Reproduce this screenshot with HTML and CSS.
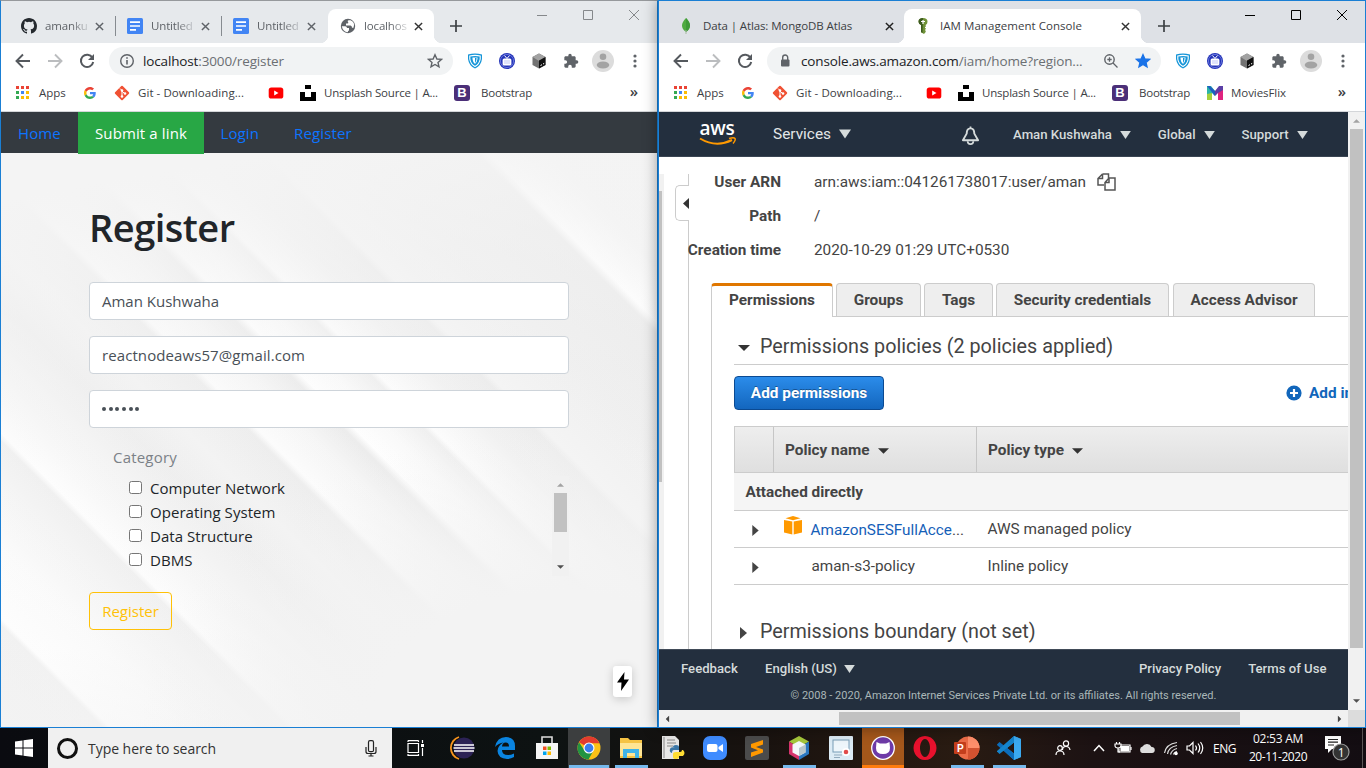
FILE: index.html
```html
<!DOCTYPE html>
<html lang="en">
<head>
<meta charset="utf-8">
<title>Desktop</title>
<link rel="stylesheet" href="styles.css">
</head>
<body>
<svg class="defs" aria-hidden="true">
  <symbol id="close" viewBox="0 0 10 10"><path d="M1 1l8 8M9 1L1 9" stroke="currentColor" stroke-width="1.6" fill="none"/></symbol>
  <symbol id="plus" viewBox="0 0 12 12"><path d="M6 0v12M0 6h12" stroke="#3c4043" stroke-width="1.7"/></symbol>
  <symbol id="back" viewBox="0 0 16 16"><path d="M15 8H2M8 1.5L1.500 8 8 14.500" fill="none" stroke="currentColor" stroke-width="1.9"/></symbol>
  <symbol id="reload" viewBox="0 0 16 16"><path d="M13.400 4.600A6.200 6.200 0 1 0 14.200 9" fill="none" stroke="#55595e" stroke-width="2"/><path d="M15 1v6H9z" fill="#55595e"/></symbol>
  <symbol id="star" viewBox="0 0 16 16"><path d="M8 1.800l1.900 4.200 4.500.4-3.400 3 1 4.500L8 11.500 4 13.900l1-4.500-3.400-3L6.100 6z" stroke-width="1.400" stroke="currentColor"/></symbol>
  <symbol id="shield" viewBox="0 0 16 16"><path d="M1 1.500Q8-.5 15 1.500V6q-1 7-7 9.500Q2 13 1 6z" fill="#1595d8"/><path d="M2.800 3q5.200-1.300 10.400 0v3q-.7 5-5.200 7.500Q3.500 11 2.800 6z" fill="none" stroke="#fff" stroke-width="1.100"/><path d="M5.500 4.500h5V6q-.3 3-2.500 5-2.200-2-2.500-5z" fill="#fff"/><path d="M8 5v5q1.300-1.500 1.500-4V5z" fill="#1595d8"/></symbol>
  <symbol id="tv" viewBox="0 0 16 16"><circle cx="8" cy="8" r="8" fill="#2434b8"/><circle cx="8" cy="8" r="6.600" fill="none" stroke="#8d98ee" stroke-width=".6"/><rect x="3.600" y="5.500" width="8.800" height="7" rx="1.500" fill="#fff"/><rect x="5" y="7" width="6" height="4" fill="#dfe3fb"/><path d="M5.500 2.500L8 5.500l2.500-3" stroke="#fff" fill="none"/></symbol>
  <symbol id="cube" viewBox="0 0 16 16"><path d="M8 .5l6.500 3.500v8L8 15.500 1.500 12V4z" fill="#737373"/><path d="M8 .5l6.500 3.500L8 8 1.500 4z" fill="#a2a2a2"/><path d="M8 7.500l6.500-3.500v8L8 15.500z" fill="#111"/><path d="M9.500 12.500l1.500-.8M12 11l1.200-.6" stroke="#fff"/></symbol>
  <symbol id="puzzle" viewBox="0 0 24 24"><path d="M20.500 11H19V7c0-1.100-.9-2-2-2h-4V3.500a2.500 2.500 0 0 0-5 0V5H4c-1.100 0-2 .9-2 2v3.800h1.500a2.700 2.700 0 0 1 0 5.400H2V20c0 1.100.9 2 2 2h3.800v-1.500a2.700 2.700 0 0 1 5.400 0V22H17c1.100 0 2-.9 2-2v-4h1.500a2.500 2.500 0 0 0 0-5z" fill="#5f6368"/></symbol>
  <symbol id="avatar" viewBox="0 0 22 22"><circle cx="11" cy="11" r="11" fill="#dcdcdc"/><circle cx="11" cy="6.800" r="3.300" fill="#a3a3a3"/><ellipse cx="11" cy="15" rx="6.300" ry="3.500" fill="#a3a3a3"/></symbol>
  <symbol id="dots" viewBox="0 0 4 16"><circle cx="2" cy="3" r="1.600" fill="#5f6368"/><circle cx="2" cy="8" r="1.600" fill="#5f6368"/><circle cx="2" cy="13" r="1.600" fill="#5f6368"/></symbol>
  <symbol id="doc" viewBox="0 0 16 16"><rect width="16" height="16" rx="1.500" fill="#4285f4"/><path d="M3 4.200h10M3 8h10M3 11.800h6" stroke="#fff" stroke-width="1.700"/></symbol>
  <symbol id="github" viewBox="0 0 16 16"><path fill="#24292e" d="M8 0C3.580 0 0 3.580 0 8c0 3.540 2.290 6.530 5.470 7.590.4.070.55-.17.55-.38 0-.19-.01-.82-.01-1.490-2.010.37-2.530-.49-2.690-.94-.09-.23-.48-.94-.82-1.130-.28-.15-.68-.52-.01-.53.63-.01 1.080.58 1.230.82.72 1.210 1.870.87 2.330.66.070-.52.28-.87.51-1.070-1.780-.2-3.640-.89-3.640-3.950 0-.87.31-1.590.82-2.150-.08-.2-.36-1.020.08-2.120 0 0 .67-.21 2.200.82a7.600 7.600 0 0 1 4 0c1.530-1.040 2.200-.82 2.200-.82.44 1.100.16 1.920.08 2.120.51.56.82 1.270.82 2.150 0 3.070-1.870 3.750-3.650 3.950.29.25.54.73.54 1.480 0 1.070-.01 1.930-.01 2.200 0 .21.15.46.55.38A8 8 0 0 0 16 8c0-4.420-3.580-8-8-8z"/></symbol>
  <symbol id="globe" viewBox="0 0 16 16"><circle cx="8" cy="8" r="7.200" fill="#5f6368"/><path d="M1.800 8.300h3.400q1.800.2 1.800 1.800H9v2.500q-1.200.2-1.200 1.600Q3 14 1.800 8.300z" fill="#fff"/><path d="M8.500 2.200Q7 3 8 4t-.5 1.500H6v2h4.500q1.500.2 1.500 2.300h1.500Q15.500 4 10.500 2.200z" fill="#fff"/></symbol>
  <symbol id="leaf" viewBox="0 0 16 16"><path d="M8 0q4 4 4 7.500T8 14Q4 11 4 7.500T8 0z" fill="#4faa41"/><path d="M8 0q4 4 4 7.500T8 14z" fill="#3f9a38"/><path d="M8 12v4" stroke="#a5b8a0"/></symbol>
  <symbol id="key" viewBox="0 0 16 16"><path d="M8 0q4.500 0 4.500 3.700 0 2.300-1.800 3.300v7L9 16l-3-1.800V7Q3.500 6 3.500 3.700 3.500 0 8 0z" fill="#6f9238"/><path d="M8 0q-4.500 0-4.500 3.700Q3.500 6 6 7v7l1.500 1z" fill="#3d5a20"/><path d="M6 3.500h4M8 2v4" stroke="#fff" stroke-width="1.200"/><path d="M10 9.500h1.500M10 12h1.500" stroke="#fff"/></symbol>
  <symbol id="apps" viewBox="0 0 13 13"><path d="M0 0h3v3H0zM5 0h3v3H5zM10 0h3v3h-3z" fill="#ea4335"/><path d="M0 5h3v3H0zM0 10h3v3H0z" fill="#34a853"/><path d="M5 5h3v3H5z" fill="#4285f4"/><path d="M10 5h3v3h-3zM5 10h3v3H5zM10 10h3v3h-3z" fill="#fbbc04"/></symbol>
  <symbol id="google" viewBox="0 0 48 48"><path fill="#EA4335" d="M24 9.500c3.540 0 6.710 1.220 9.210 3.600l6.850-6.850C35.900 2.380 30.470 0 24 0 14.620 0 6.510 5.380 2.560 13.220l7.980 6.190C12.430 13.720 17.740 9.500 24 9.500z"/><path fill="#4285F4" d="M46.980 24.550c0-1.570-.15-3.090-.38-4.550H24v9.020h12.940c-.58 2.960-2.260 5.480-4.780 7.180l7.730 6c4.510-4.180 7.090-10.360 7.090-17.650z"/><path fill="#FBBC05" d="M10.530 28.590A14.500 14.500 0 0 1 9.770 24c0-1.600.27-3.140.76-4.590l-7.980-6.190A23.900 23.900 0 0 0 0 24c0 3.880.92 7.540 2.560 10.780z"/><path fill="#34A853" d="M24 48c6.480 0 11.930-2.130 15.890-5.810l-7.730-6c-2.150 1.450-4.920 2.300-8.160 2.300-6.260 0-11.570-4.220-13.470-9.910l-7.980 6.190C6.510 42.620 14.620 48 24 48z"/></symbol>
  <symbol id="git" viewBox="0 0 16 16"><rect x="2.600" y="2.600" width="10.800" height="10.800" rx="1" transform="rotate(45 8 8)" fill="#f05133"/><path d="M6 3.500l2 2v6M8 6l3 3" stroke="#fff" fill="none"/><circle cx="8" cy="5.500" r="1.300" fill="#fff"/><circle cx="8" cy="11.500" r="1.300" fill="#fff"/><circle cx="11" cy="8.500" r="1.300" fill="#fff"/></symbol>
  <symbol id="youtube" viewBox="0 0 16 16"><rect x=".7" y="2.500" width="14.600" height="11" rx="2.600" fill="#f00"/><path d="M6.200 5.500v5l4.300-2.500z" fill="#fff"/></symbol>
  <symbol id="unsplash" viewBox="0 0 16 16"><path d="M5 0h6v4H5zM0 7h5v5h6V7h5v9H0z"/></symbol>
  <symbol id="movies" viewBox="0 0 16 16"><path d="M0 1h4l4 5v5L5 8v7H0z" fill="#2bb3a8"/><path d="M0 1h3l5 5v5z" fill="#1d5fc0"/><path d="M0 9l5-1v7H0z" fill="#a4cf3c"/><path d="M16 1h-4L8 6v5l3-3v7h5z" fill="#5b3fa6"/><path d="M11 8l5-3v10h-5z" fill="#e0237f"/></symbol>
  <symbol id="down" viewBox="0 0 12 9"><path d="M0 0h12L6 9z" fill="currentColor"/></symbol>
  <symbol id="caret" viewBox="0 0 10 5"><path d="M0 0h10L5 5z" fill="currentColor"/></symbol>
  <symbol id="right" viewBox="0 0 7 12"><path d="M0 0v12l7-6z" fill="#444"/></symbol>
</svg>

<div class="desktop">
<div class="windows">

<section class="window window-left">
  <div class="tabstrip">
    <div class="tab tab-s"><svg class="i16"><use href="#github"/></svg><span class="tab-text">amanku</span><svg class="x"><use href="#close"/></svg></div>
    <div class="tab tab-s"><svg class="i16"><use href="#doc"/></svg><span class="tab-text">Untitled</span><svg class="x"><use href="#close"/></svg></div>
    <div class="tab tab-s last"><svg class="i16"><use href="#doc"/></svg><span class="tab-text">Untitled</span><svg class="x"><use href="#close"/></svg></div>
    <div class="tab tab-s active"><svg class="i16"><use href="#globe"/></svg><span class="tab-text">localhos</span><svg class="x"><use href="#close"/></svg></div>
    <svg class="new"><use href="#plus"/></svg>
    <svg class="winbtns" viewBox="0 0 104 12"><path d="M1 6.500h10M47.500 1.500h9v9h-9zM93 1l10 10M103 1L93 11" fill="none" stroke="currentColor"/></svg>
  </div>
  <div class="toolbar">
    <svg class="nav"><use href="#back"/></svg><svg class="nav fwd"><use href="#back"/></svg><svg class="nav"><use href="#reload"/></svg>
    <div class="omni"><svg class="i16" viewBox="0 0 16 16"><circle cx="8" cy="8" r="6.300" fill="none" stroke="#5f6368" stroke-width="1.400"/><path d="M8 7v4.500M8 4.200v1.600" stroke="#5f6368" stroke-width="1.600"/></svg><span class="url"><b>localhost</b>:3000/register</span><svg class="i16 star"><use href="#star"/></svg></div>
    <div class="exts"><svg class="i16"><use href="#shield"/></svg><svg class="i16"><use href="#tv"/></svg><svg class="i16"><use href="#cube"/></svg><svg class="i16"><use href="#puzzle"/></svg><svg class="ava"><use href="#avatar"/></svg><svg class="dots"><use href="#dots"/></svg></div>
  </div>
  <div class="bookmarks">
    <svg class="i13"><use href="#apps"/></svg><span class="bm b1">Apps</span><svg class="i12"><use href="#google"/></svg>
    <svg class="i16 g1"><use href="#git"/></svg><span class="bm b2">Git - Downloading...</span><svg class="i16"><use href="#youtube"/></svg>
    <svg class="i16 g2"><use href="#unsplash"/></svg><span class="bm b3">Unsplash Source | A...</span><span class="bs">B</span><span class="bm b4">Bootstrap</span><span class="more">»</span>
  </div>
  <div class="site">
    <nav class="sitenav"><a>Home</a><a class="submit">Submit a link</a><a>Login</a><a class="reg">Register</a></nav>
    <main class="form">
      <h1>Register</h1>
      <div class="field">Aman Kushwaha</div>
      <div class="field f2">reactnodeaws57@gmail.com</div>
      <div class="field pw"><i></i><i></i><i></i><i></i><i></i><i></i></div>
      <div class="category">Category</div>
      <div class="listwrap">
        <ul class="list"><li><i></i>Computer Network</li><li><i></i>Operating System</li><li><i></i>Data Structure</li><li><i></i>DBMS</li></ul>
        <div class="scroll"><svg class="sa up"><use href="#caret"/></svg><div class="thumb"></div><svg class="sa"><use href="#caret"/></svg></div>
      </div>
      <button class="btn">Register</button>
    </main>
    <div class="bolt"><svg width="14" height="19" viewBox="0 0 14 19"><path d="M8.500 0L1 10.500h4.500L5 19l8-11.500H8z"/></svg></div>
  </div>
</section>

<section class="window window-right">
  <div class="tabstrip">
    <div class="tab tab-l"><svg class="i16"><use href="#leaf"/></svg><span class="tab-text t1">Data | Atlas: MongoDB Atlas</span><svg class="x"><use href="#close"/></svg></div>
    <div class="tab tab-l active"><svg class="i16"><use href="#key"/></svg><span class="tab-text">IAM Management Console</span><svg class="x"><use href="#close"/></svg></div>
    <svg class="new"><use href="#plus"/></svg>
    <svg class="winbtns" viewBox="0 0 104 12"><path d="M1 6.500h10M47.500 1.500h9v9h-9zM93 1l10 10M103 1L93 11" fill="none" stroke="currentColor"/></svg>
  </div>
  <div class="toolbar">
    <svg class="nav"><use href="#back"/></svg><svg class="nav fwd"><use href="#back"/></svg><svg class="nav"><use href="#reload"/></svg>
    <div class="omni"><svg class="i16" viewBox="0 0 16 16"><rect x="4" y="6.500" width="8.500" height="7" rx="1" fill="#5f6368"/><path d="M5.700 7V4.500a2.500 2.500 0 0 1 5 0V7" fill="none" stroke="#5f6368" stroke-width="1.400"/></svg><span class="url"><b>console.aws.amazon.com</b>/iam/home?region...</span><svg class="i16 mag" viewBox="0 0 16 16"><circle cx="6.500" cy="6.500" r="4.700" fill="none" stroke="#5f6368" stroke-width="1.400"/><path d="M10 10l4.500 4.500M4.300 6.500h4.400M6.500 4.300v4.400" stroke="#5f6368" stroke-width="1.300"/></svg><svg class="i16 star on"><use href="#star"/></svg></div>
    <div class="exts"><svg class="i16"><use href="#shield"/></svg><svg class="i16"><use href="#tv"/></svg><svg class="i16"><use href="#cube"/></svg><svg class="i16"><use href="#puzzle"/></svg><svg class="ava"><use href="#avatar"/></svg><svg class="dots"><use href="#dots"/></svg></div>
  </div>
  <div class="bookmarks">
    <svg class="i13"><use href="#apps"/></svg><span class="bm b1">Apps</span><svg class="i12"><use href="#google"/></svg>
    <svg class="i16 g1"><use href="#git"/></svg><span class="bm b2">Git - Downloading...</span><svg class="i16"><use href="#youtube"/></svg>
    <svg class="i16 g2"><use href="#unsplash"/></svg><span class="bm b3">Unsplash Source | A...</span><span class="bs">B</span><span class="bm b4">Bootstrap</span><svg class="i16 g3"><use href="#movies"/></svg><span class="bm b5">MoviesFlix</span><span class="more">»</span>
  </div>
  <div class="console">
    <div class="view">
      <header class="aws-head">
        <div class="aws-logo"><span>aws</span><svg width="37" height="9" viewBox="0 0 37 9"><path d="M1 1.500Q17 11 33 3" fill="none" stroke="#f90" stroke-width="2"/><path d="M30 1.500q5-1.500 6 0t-2 5" fill="none" stroke="#f90" stroke-width="1.500"/></svg></div>
        <span class="services">Services</span><svg class="dn"><use href="#down"/></svg>
        <svg class="bell" viewBox="0 0 20 20"><path d="M10 2.500q-4 0-4 5.500L2 15h16l-4-7q0-5.500-4-5.500z" fill="none" stroke="currentColor" stroke-width="2" stroke-linejoin="round"/><path d="M10 .5v2M7 16q0 3 3 3t3-3" stroke="currentColor" stroke-width="1.800" fill="none"/></svg>
        <span class="hm">Aman Kushwaha</span><svg class="dn s"><use href="#down"/></svg>
        <span class="hm">Global</span><svg class="dn s"><use href="#down"/></svg>
        <span class="hm">Support</span><svg class="dn s"><use href="#down"/></svg>
      </header>
      <div class="aws-body">
        <div class="nav-scroll"><div></div></div>
        <div class="rail"><div class="rail-top"></div><div class="toggle"><svg width="6" height="11" viewBox="0 0 6 11"><path d="M6 0v11L0 5.500z" fill="#333"/></svg></div><div class="rail-rest"></div></div>
        <div class="content">
          <dl class="facts">
            <dt>User ARN</dt><dd>arn:aws:iam::041261738017:user/aman<svg class="copy" viewBox="0 0 19 18"><path d="M5.500 1h6v4M5.500 1L1 5.500V12h6M5.500 1v4.500H1M12 5h6v12H8V9.500zM12 5v4.500H8" fill="none" stroke="#555" stroke-width="1.500"/></svg></dd>
            <dt>Path</dt><dd>/</dd>
            <dt>Creation time</dt><dd>2020-10-29 01:29 UTC+0530</dd>
          </dl>
          <div class="ctabs"><span class="ct on">Permissions</span><span class="ct c2">Groups</span><span class="ct c3">Tags</span><span class="ct c4">Security credentials</span><span class="ct c5">Access Advisor</span></div>
          <div class="panel">
            <h2><svg class="car"><use href="#caret"/></svg>Permissions policies (2 policies applied)</h2>
            <div class="actions"><button class="add">Add permissions</button><a class="inline"><svg width="16" height="16" viewBox="0 0 16 16"><circle cx="8" cy="8" r="7.600" fill="#1166bb"/><path d="M8 4v8M4 8h8" stroke="#fff" stroke-width="2.200"/></svg>Add in</a></div>
            <div class="thead"><span></span><span>Policy name<svg class="car2"><use href="#caret"/></svg></span><span>Policy type<svg class="car2"><use href="#caret"/></svg></span></div>
            <div class="group">Attached directly</div>
            <div class="row"><svg class="tri"><use href="#right"/></svg><svg class="box" viewBox="0 0 18 19"><path d="M0 4l8.300 1.600V18.500L0 16.500zM18 4L9.700 5.600V18.500L18 16.500z" fill="#f90"/><path d="M9 0l7.500 2.300L9 4.300 1.500 2.300z" fill="#f90"/></svg><span class="pname link">AmazonSESFullAcce<em>...</em></span><span>AWS managed policy</span></div>
            <div class="row"><svg class="tri"><use href="#right"/></svg><i class="box"></i><span class="pname plain">aman-s3-policy</span><span>Inline policy</span></div>
            <h2 class="bound"><svg class="tri"><use href="#right"/></svg>Permissions boundary (not set)</h2>
          </div>
        </div>
      </div>
      <footer class="aws-foot">
        <div class="fl"><span class="f-a">Feedback</span><span>English (US)</span><svg class="dn s"><use href="#down"/></svg><span class="f-p">Privacy Policy</span><span>Terms of Use</span></div>
        <p>© 2008 - 2020, Amazon Internet Services Private Ltd. or its affiliates. All rights reserved.</p>
      </footer>
      <div class="hscroll"><svg class="ha l"><use href="#caret"/></svg><div></div><svg class="ha r"><use href="#caret"/></svg></div>
    </div>
    <div class="vscroll"><svg class="sa up"><use href="#caret"/></svg><div class="vthumb"></div><svg class="sa"><use href="#caret"/></svg><div class="corner"></div></div>
  </div>
</section>
</div>

<div class="taskbar">
  <div class="start"><svg width="18" height="18" viewBox="0 0 18 18"><path d="M0 2.500l7.500-1v7H0zM8.500 1.300L18 0v8.500H8.500zM0 9.500h7.500v7l-7.500-1zM8.500 9.500H18V18l-9.500-1.300z" fill="#fff"/></svg></div>
  <div class="search"><i class="cortana"></i><span>Type here to search</span><svg width="12" height="17" viewBox="0 0 12 17"><rect x="3.500" y=".7" width="5" height="11" rx="1.500" fill="none" stroke="#222" stroke-width="1.200"/><path d="M1 7v4.500q0 2 2 2h6q2 0 2-2V7M6 13.500V16M3.500 16h5" fill="none" stroke="#222" stroke-width="1.200"/></svg></div>
  <div class="task tv"><svg width="18" height="16" viewBox="0 0 18 16"><path d="M1 3.500h10.500v9H1zM1 .500V2M11.500.500V2M1 14v2M11.500 14v2M1 .600h10.500M1 15.400h10.500M15.500 0v3M15.500 8v8" fill="none" stroke="#fff" stroke-width="1.200"/><path d="M14 4h3v3h-3z" fill="#fff"/></svg></div>
  <div class="task"><svg width="24" height="24" viewBox="0 0 24 24"><path d="M8 1a11.500 11.500 0 0 0 0 22" fill="none" stroke="#f7941e" stroke-width="1.800"/><circle cx="13" cy="12" r="10.500" fill="#2c2255"/><path d="M3 9h20M2.500 12h21M3 15h20" stroke="#fff" stroke-width="1.500"/></svg></div>
  <div class="task"><svg width="22" height="22" viewBox="0 0 22 22"><path d="M1 10Q3 0 12 0q9 .5 9 9v4H8q0 5 6 5 3 0 6-1.500V20q-3 2-7 2-9-.5-9.500-8Q4 8 9.500 5.500 4.500 6 1 10zM8 9.500h7q0-4-3.300-4T8 9.500z" fill="#0a84e0"/></svg></div>
  <div class="task"><svg width="24" height="24" viewBox="0 0 24 24"><path d="M1 7h22v16H1z" fill="#f5f5f5"/><path d="M7 7V1h10v6" fill="none" stroke="#ddd" stroke-width="1.600"/><path d="M8 10.500h3.500V14H8z" fill="#f25022"/><path d="M12.500 10.500H16V14h-3.500z" fill="#7fba00"/><path d="M8 15.500h3.500V19H8z" fill="#00a4ef"/><path d="M12.500 15.500H16V19h-3.500z" fill="#ffb900"/></svg></div>
  <div class="task cur run"><svg width="24" height="24" viewBox="0 0 24 24"><circle cx="12" cy="12" r="11.500" fill="#fbc116"/><path d="M12 12L2 6.200A11.500 11.500 0 0 1 22.500 7.200H12z" fill="#e33b2e"/><path d="M2 6.200A11.500 11.500 0 0 0 11.500 23.500l5-9-9 0z" fill="#229342"/><circle cx="12" cy="12" r="5.500" fill="#fff"/><circle cx="12" cy="12" r="4.400" fill="#3b7ded"/></svg></div>
  <div class="task run"><svg width="24" height="22" viewBox="0 0 24 22"><path d="M1 1h8l2 2h12v18H1z" fill="#f5c344"/><path d="M1 6h22v13H1z" fill="#ffe594"/><path d="M4 21v-9h16v9h-4v-5H8v5z" fill="#40b4e8"/></svg></div>
  <div class="task"><svg width="24" height="24" viewBox="0 0 24 24"><path d="M1 0h13l4 4v19H1z" fill="#e8e8e8"/><path d="M3 1v21M6 4h8M6 7h9M6 10h6" stroke="#888"/><path d="M12 11q0-2 3-2t3 2v3h-5q-2 0-2 3-3-1-2-4t5-1z" fill="#3b77a8"/><path d="M22 14q3 3 0 6h-4v1q0 2-3 2t-3-2v-3q0-2 3-2h4q2 0 2-2z" fill="#fd3"/></svg></div>
  <div class="task"><svg width="24" height="24" viewBox="0 0 24 24"><rect width="24" height="24" rx="7" fill="#3f8cff"/><rect x="4" y="8" width="10.500" height="8" rx="2" fill="#fff"/><path d="M15.500 11l4.500-3v8l-4.500-3z" fill="#fff"/></svg></div>
  <div class="task"><svg width="24" height="24" viewBox="0 0 24 24"><rect width="24" height="24" rx="2" fill="#4b4b4b"/><path d="M18 4v4.500L11 11l7 2.500v3L6 21v-4.500l7-2.300-7-2.700V8z" fill="#ff9800"/></svg></div>
  <div class="task run"><svg width="22" height="24" viewBox="0 0 22 24"><path d="M11 0l10 5.500-10 6-10-6z" fill="#a5c73b"/><path d="M1 5.500l10 6V24L1 18z" fill="#d6336c"/><path d="M21 5.500l-10 6V24l10-6z" fill="#2a77c0"/><path d="M11 5l6.500 3.500v8L11 20l-6.500-3.500v-8z" fill="#f4f8fa"/><path d="M11 12l6.500-3.500v8L11 20z" fill="#b9c7cc"/></svg></div>
  <div class="task"><svg width="24" height="24" viewBox="0 0 24 24"><rect width="24" height="24" rx="1" fill="#dcebf5"/><rect x="4" y="4" width="16" height="12" fill="#eef6fb" stroke="#789eb8"/><path d="M5 19h8M5 21.500h6" stroke="#91aabd"/><circle cx="17" cy="16" r="4" fill="#fff"/><circle cx="17" cy="16" r="2.300" fill="#e14b4b"/></svg></div>
  <div class="task gh"><svg width="24" height="24" viewBox="0 0 24 24"><circle cx="12" cy="12" r="11.300" fill="#6e3aa7" stroke="#fff" stroke-width="1.300"/><path d="M5.500 6l3.500 1.500h6L18.500 6 19 12q0 6-7 6t-7-6z" fill="#fff"/></svg></div>
  <div class="task"><svg width="24" height="24" viewBox="0 0 24 24"><path fill-rule="evenodd" d="M12 0a11.500 12 0 1 0 .01 0zM12 3a5 9 0 1 1-.01 0z" fill="#e8112d"/></svg></div>
  <div class="task run"><svg width="26" height="24" viewBox="0 0 26 24"><circle cx="14" cy="12" r="11.500" fill="#ed6c47"/><path d="M14 .5A11.500 11.500 0 0 1 25.500 12H14z" fill="#ff8f6b"/><path d="M14 23.500A11.500 11.500 0 0 0 25.500 12H14z" fill="#d35230"/><rect x="0" y="6" width="12" height="12" rx="1" fill="#c43e1c"/><text x="3" y="15.700" class="pp">P</text></svg></div>
  <div class="task run"><svg width="24" height="24" viewBox="0 0 24 24"><path d="M17 0l7 3v18l-7 3-13-12zM17 6.500L10 12l7 5.500z" fill="#1b8cd8" fill-rule="evenodd"/><path d="M17 0l7 3v18l-7 3z" fill="#3ba9f0"/><path d="M0 8.500L2.500 6 17 17.500V24L0 9z" fill="#0c6dbb"/><path d="M0 15.500L2.500 18 17 6.500V0L0 15z" fill="#1584cc"/></svg></div>
  <div class="tray">
    <svg class="people" viewBox="0 0 16 16"><circle cx="11" cy="3.500" r="2.600"/><path d="M7.500 10q0-3.500 3.500-3.500t4 3.500"/><circle cx="5" cy="8" r="2.300"/><path d="M1 15q0-4 4-4t4 4"/></svg>
    <svg class="ti t-up" viewBox="0 0 16 16"><path d="M3 11l5-5.500L13 11" stroke-width="1.500"/></svg>
    <svg class="ti" viewBox="0 0 18 16"><path d="M7 5h9v7H5V9"/><path d="M7 6.500h7.500V11H7z" fill="#fff"/><path d="M17 7v3M2.500 2v2M5.500 2v2M1 4h6v1.500Q7 8 4 8T1 5.500zM4 8v4h2"/></svg>
    <svg class="ti" viewBox="0 0 18 16"><path d="M4 13a3.500 3.500 0 0 1 .5-6.500A5 5 0 0 1 13.500 7a3 3 0 0 1 .5 6z" fill="#ddd" stroke="none"/></svg>
    <svg class="ti" viewBox="0 0 16 16"><path d="M1.500 13Q3 4 14 2.500M4.500 14Q5.500 7 14 5.500M7.500 14.500Q8.500 10 14 8.500M10.500 14.500q.5-2.500 3.500-3" stroke="#ddd"/><circle cx="13" cy="13.500" r="1.200" fill="#fff"/></svg>
    <svg class="ti" viewBox="0 0 18 16"><path d="M1 6h2.500L7 2.500v11L3.500 10H1zM9.500 5.500q2 2.500 0 5M12 3.500q3.500 4.500 0 9M14.500 2q4.500 6 0 12"/></svg>
    <span class="eng">ENG</span>
    <div class="clock"><span>02:53 AM</span><span class="date">20-11-2020</span></div>
    <svg class="note" viewBox="0 0 26 26"><path d="M1 0h16v13H8l-4 4v-4H1z" fill="#fff"/><path d="M4 3.500h10M4 6.200h10M4 9h6" stroke="#222"/><circle cx="17" cy="16" r="8" fill="#333" stroke="#999"/><text x="13.800" y="20.500" class="nt">1</text></svg>
  </div>
</div>
</div>
</body>
</html>
```
FILE: styles.css
```css
* { box-sizing: border-box; }
body { margin: 0; width: 1366px; height: 768px; overflow: hidden; background: #111; font-family: "Open Sans", "Noto Sans", sans-serif; }
svg { flex: none; display: block; overflow: visible; }
.defs { position: absolute; width: 0; height: 0; }
.desktop { display: flex; flex-direction: column; height: 768px; }
.windows { display: grid; grid-template-columns: 658px 708px; height: 728px; }

/* browser window chrome */
.window { display: flex; flex-direction: column; height: 728px; border: 1px solid #1a7fd4; background: #fff; overflow: hidden; }
.window-left { border-top-color: #96999c; }
.window-right { position: relative; z-index: 2; overflow: visible; box-shadow: 0 0 14px rgba(0,0,0,.4); }
.tabstrip { display: flex; align-items: center; height: 42px; padding: 8px 0 0 8px; background: #e6e9ec; flex: none; color: #5f6368; }
.window-right .tabstrip { background: #dee1e6; color: #3c4043; }
.i16 { width: 16px; height: 16px; }
.i13 { width: 13px; height: 13px; }
.i12 { width: 12px; height: 12px; margin-right: 1px; }
.tab { display: flex; align-items: center; height: 34px; padding-left: 12px; border-radius: 8px 8px 0 0; font-size: 11.5px; position: relative; }
.tab-s { width: 106px; }
.tab-l { width: 237px; padding-left: 11px; }
.tab-s:not(.active):not(.last)::after { content: ""; position: absolute; right: -1px; top: 7px; height: 20px; width: 1px; background: #868b90; }
.tab.active { background: #fff; margin-left: 1px; }
.tab-l.active { margin-left: 0; }
.tab.active::before { content: ""; position: absolute; left: -8px; right: -8px; bottom: 0; height: 8px; background: radial-gradient(circle at 0 0, transparent 8px, #fff 8.5px) left / 8px 8px no-repeat, radial-gradient(circle at 100% 0, transparent 8px, #fff 8.5px) right / 8px 8px no-repeat; }
.tab-text { margin-left: 8px; width: 44px; white-space: nowrap; margin-top: -1px; letter-spacing: -.15px; -webkit-mask-image: linear-gradient(90deg, #000 60%, rgba(0,0,0,.15)); mask-image: linear-gradient(90deg, #000 60%, rgba(0,0,0,.15)); }
.tab-l .tab-text { margin-left: 9px; width: 181px; -webkit-mask-image: none; mask-image: none; }
.tab-l.active .tab-text { margin-left: 7px; width: 182px; letter-spacing: .05px; padding-left: 2px; }
.tab-l .t1 { letter-spacing: -.11px; }
.x { width: 9px; height: 9px; margin-left: 6px; }
.tab-l .x { margin-left: 1px; color: #222; }
.tab.active .x { color: #333; }
.new { width: 12px; height: 12px; margin-left: 16px; }
.window-right .new { margin-left: 17px; }
.winbtns { width: 104px; height: 12px; margin: 0 17px 0 auto; align-self: flex-start; color: #85888b; }
.window-right .winbtns { color: #000; }
.toolbar { display: flex; align-items: center; height: 36px; flex: none; padding-left: 14px; }
.nav { width: 16px; height: 16px; margin-right: 16px; color: #55595e; }
.fwd { transform: scaleX(-1); color: #bbbdbf; }
.omni { display: flex; align-items: center; width: 344px; height: 28px; border-radius: 14px; background: #f1f3f4; padding-left: 10px; margin-left: -2px; }
.window-right .omni { width: 394px; }
.url { margin-left: 8px; font-size: 13.5px; letter-spacing: -.14px; color: #6b6f73; white-space: nowrap; }
.url b { font-weight: 400; color: #202124; }
.star { margin-left: auto; margin-right: 10px; color: #5f6368; fill: none; }
.mag { margin-left: auto; }
.mag + .star { margin-left: 16px; }
.star.on { color: #1a73e8; fill: #1a73e8; }
.exts { display: flex; align-items: center; gap: 16px; margin-left: 14px; }
.ava { width: 22px; height: 22px; margin: 0 -3px; }
.dots { width: 4px; height: 16px; margin-left: 6px; }
.bookmarks { display: flex; align-items: center; height: 33px; flex: none; padding: 0 0 5px 15px; border-bottom: 1px solid #d4d6d9; font-size: 11.5px; color: #3c4043; white-space: nowrap; }
.bm { margin-left: 10px; }
.b1 { width: 45px; }
.g1 { margin-left: 17px; }
.b2 { width: 130px; margin-left: 8px; letter-spacing: .06px; }
.g2 { margin-left: 16px; }
.b3 { width: 130px; margin-left: 8px; letter-spacing: -.2px; }
.bs { width: 16px; height: 16px; border-radius: 3px; background: #4b2f78; color: #fff; font: 700 13px/16px "Liberation Sans", Arial, sans-serif; text-align: center; }
.b4 { width: 67px; margin-left: 11px; letter-spacing: -.22px; }
.b5 { margin-left: 8px; letter-spacing: -.06px; }
.g3 { margin-left: 1px; }
.more { margin-left: auto; margin-right: 19px; font-size: 15px; font-weight: 600; line-height: 14px; margin-top: -3px; }

/* register page */
.site { position: relative; flex: 1; overflow: hidden; color: #212529; background:
  radial-gradient(ellipse 420px 300px at 560px 615px, #f3f3f3 45%, rgba(243,243,243,0) 100%),
  linear-gradient(170deg, #f4f4f4 12%, rgba(243,243,243,.45) 30%, rgba(243,243,243,.1) 50%, rgba(243,243,243,.2) 75%, #f3f3f3 105%),
  linear-gradient(45deg, #f3f3f3 0, #f1f1f1 72px, #fff 77px, #fcfcfc 125px, #f0f0f0 202px, #fefefe 208px, #f8f8f8 238px, #eeeeee 300px, #f3f3f3 340px, #ededed 385px, #fdfdfd 392px, #f6f6f6 425px, #ebebeb 453px, #fff 461px, #fafafa 485px, #efefef 510px, #fdfdfd 516px, #f1f1f1 555px, #ececec 588px, #f4f4f4 594px, #efefef 660px, #ececec 742px, #fff 750px, #f5f5f5 790px, #f3f3f3 100%); }
.sitenav { display: flex; height: 41px; background: #343a40; font-size: 15px; line-height: 40px; color: #0d74ff; letter-spacing: .12px; }
.sitenav a { padding: 1px 17px 0 16.500px; }
.sitenav a:first-child { width: 77px; padding-left: 17px; }
.sitenav .submit { width: 126px; height: 42px; background: #28a745; color: #fff; font-weight: 500; padding-left: 17px; }
.sitenav .reg { padding-left: 18px; }
.form { padding: 0 88px; }
h1 { margin: 50px 0 31px; font-size: 38px; font-weight: 600; line-height: 48px; letter-spacing: -.5px; }
.field { display: flex; align-items: center; height: 38px; margin-bottom: 16px; border: 1px solid #ced4da; border-radius: 4px; background: #fff; padding: 0 12px; font-size: 15px; color: #495057; }
.field.f2 { letter-spacing: .09px; }
.pw { gap: 2.700px; }
.pw i { width: 4px; height: 4px; border-radius: 50%; background: #495057; }
.category { margin: -5px 0 0 24px; padding-top: 0; height: 36px; line-height: 34px; font-size: 15px; color: #7b8187; letter-spacing: .2px; }
.field.pw { margin-bottom: 17px; }
.listwrap { display: flex; justify-content: space-between; height: 100px; overflow: hidden; }
.list { list-style: none; margin: 0; padding: 0 0 0 40px; font-size: 15px; letter-spacing: .05px; }
.list li { display: flex; align-items: center; height: 24px; gap: 8px; }
.list i { width: 13px; height: 13px; border: 1px solid #767676; border-radius: 2.500px; background: #fff; margin-top: -2px; }
.scroll { display: flex; flex-direction: column; align-items: center; width: 17px; background: #f1f1f1; }
.sa { width: 7px; height: 4px; color: #505050; }
.sa.up { transform: scaleY(-1); color: #a3a3a3; }
.scroll .up { margin-top: 7px; }
.thumb { width: 13px; height: 39px; background: #c1c1c1; margin: 6px 0 33px; }
.btn { display: block; width: 83px; height: 38px; margin-top: 16px; padding: 0; border: 1px solid #ffc107; border-radius: 4px; background: none; color: #ffc107; font: 15px "Open Sans", sans-serif; }
.bolt { position: absolute; left: 612px; top: 554px; width: 19px; height: 31px; display: flex; align-items: center; justify-content: center; background: #fff; border-radius: 3px; box-shadow: 0 2px 10px rgba(0,0,0,.18); }

/* aws console */
.console { display: flex; flex: 1; min-height: 0; font-family: Roboto, sans-serif; color: #444; }
.view { width: 689px; display: flex; flex-direction: column; overflow: hidden; }
.aws-head { display: flex; align-items: center; height: 45px; flex: none; background: #232f3e; border-bottom: 1px solid #3a4553; color: #e3e7e8; }
.aws-logo { width: 37px; margin: -4px 37px 0 40px; color: #fff; font: 600 19px/18px "Open Sans", sans-serif; letter-spacing: -.3px; }
.aws-logo span { display: block; margin-left: .5px; }
.services { width: 66px; font-size: 15.400px; }
.dn { width: 12px; height: 10px; color: #d5dbdb; }
.dn.s { width: 11px; height: 8px; }
.bell { width: 19px; height: 19px; margin: 2px 33px 0 110px; color: #d5dbdb; }
.hm { font-size: 13.200px; font-weight: 500; color: #d5dbdb; margin-top: 1px; }
.hm + .dn { margin: 1px 27px 0 8px; }
.aws-body { display: flex; height: 492px; flex: none; overflow: hidden; }
.nav-scroll { width: 5px; margin-top: 17px; padding-top: 17px; background: #f1f1f1; }
.nav-scroll div { width: 3px; height: 291px; background: #c1c1c1; }
.rail { display: flex; flex-direction: column; width: 25px; padding-top: 17px; }
.rail-top { height: 11px; border-right: 1px solid #ccc; }
.toggle { display: flex; align-items: center; justify-content: flex-end; width: 14px; height: 36px; margin-left: 11px; border: 1px solid #ccc; border-right: 0; border-radius: 5px 0 0 5px; }
.rail-rest { flex: 1; border-right: 1px solid #ccc; }
.content { width: 659px; padding-top: 8px; flex: none; }
.facts { display: grid; grid-template-columns: 92px 1fr; column-gap: 33px; grid-auto-rows: 34px; align-items: center; margin: 0; font-size: 15.350px; white-space: nowrap; }
dt { display: flex; justify-content: flex-end; font-weight: 700; }
dd { display: flex; align-items: center; margin: 0; }
.copy { width: 19px; height: 18px; margin-left: 11px; }
.ctabs { display: flex; gap: 3px; height: 34px; margin: 16px 0 0 22px; border-bottom: 1px solid #ccc; font-size: 15.350px; font-weight: 700; }
.ct { display: flex; justify-content: center; align-items: center; height: 33px; border: 1px solid #ccc; border-bottom: 0; border-radius: 4px 4px 0 0; background: #eee; }
.ct.on { width: 122px; height: 34px; background: #fff; border-top: 3px solid #e07700; padding-bottom: 3px; }
.c2 { width: 85px; } .c3 { width: 69px; } .c4 { width: 173px; } .c5 { width: 142px; margin-left: 1px; }
.panel { margin-left: 22px; padding-left: 22px; border-left: 1px solid #ccc; height: 340px; }
h2 { display: flex; align-items: center; margin: 0; height: 48px; padding: 11px 0 0 4px; font-size: 19.750px; font-weight: 400; border-bottom: 1px solid #ccc; }
.car { width: 12px; height: 6px; margin-right: 10px; margin-top: 4px; color: #333; }
.actions { display: flex; align-items: center; height: 61px; padding-bottom: 5px; overflow: hidden; }
.add { flex: none; width: 150px; height: 34px; padding: 0; border: 1px solid #0b4a92; border-radius: 4px; background: linear-gradient(#2b8cea, #1366be); color: #fff; font: 700 15.350px Roboto, sans-serif; text-shadow: 0 -1px 0 rgba(0,0,0,.35); }
.inline { display: flex; flex: none; align-items: center; gap: 7px; margin-left: 402px; color: #1166bb; font-size: 15.350px; font-weight: 700; white-space: nowrap; }
.thead { display: grid; grid-template-columns: 38px 203px 1fr; height: 47px; border: solid #ccc; border-width: 1px 0 1px 1px; background: linear-gradient(#eee, #dfdfdf); font-size: 15.350px; font-weight: 700; }
.thead span { display: flex; align-items: center; padding-left: 11px; border-left: 1px solid #c6c6c6; }
.thead span:first-child { border: 0; }
.car2 { width: 11px; height: 6px; margin: 3px 0 0 8px; color: #333; }
.group { height: 38px; line-height: 38px; padding-left: 11.500px; background: #f5f5f5; border-bottom: 1px solid #ccc; font-size: 15.350px; font-weight: 700; }
.row { display: flex; align-items: center; height: 37px; border-bottom: 1px solid #ccc; padding-left: 17.500px; font-size: 15.350px; }
.tri { width: 7px; height: 11px; margin-top: 2px; }
.row .box { width: 18px; height: 19px; margin: -7px 9px 0 25px; }
.pname { width: 177px; font-size: 15.300px; }
.pname.plain { padding-left: 1px; }
.link { color: #1560b8; margin-top: 2px; }
.link em { font-style: normal; color: #444; }
.bound { height: 75px; padding: 18px 0 0 6px; border: 0; }
.bound .tri { margin-right: 13px; margin-top: 3px; height: 12px; }
.aws-foot { height: 61px; flex: none; background: #232f3e; border-top: 1px solid #414b58; color: #d5dbdb; }
.fl { display: flex; align-items: center; height: 37px; padding-left: 22px; font-size: 13.150px; font-weight: 500; white-space: nowrap; }
.f-a { width: 84px; }
.fl .dn { margin-left: 7px; }
.f-p { margin-left: 284px; margin-right: 27px; }
.aws-foot p { margin: 0; font-size: 11px; color: #aab7b8; text-align: center; line-height: 18px; }
.hscroll { display: flex; align-items: center; justify-content: space-between; height: 17px; flex: none; background: #f1f1f1; padding: 0 5px; }
.hscroll div { width: 401px; height: 13px; margin-left: 71px; background: #c1c1c1; }
.ha { width: 7px; height: 4px; color: #444; }
.ha.l { transform: rotate(90deg); }
.ha.r { transform: rotate(-90deg); }
.vscroll { display: flex; flex-direction: column; align-items: center; width: 17px; background: #f1f1f1; }
.vscroll .up { margin-top: 7px; }
.vthumb { width: 13px; height: 519px; margin: 6px 0 51px; background: #c1c1c1; }
.corner { width: 17px; height: 17px; margin-top: auto; background: #dcdcdc; }

/* taskbar */
.taskbar { display: flex; height: 40px; background: linear-gradient(90deg, #0a0b10, #0d1212 40%, #18120f 55%, #291b12 70%, #1c1213 80%, #130d12); color: #fff; }
.start { display: flex; width: 48px; align-items: center; justify-content: center; }
.search { display: flex; align-items: center; width: 344px; background: #f0f0f0; padding: 0 15px 0 10px; color: #333; font-size: 14px; letter-spacing: -.04px; }
.search span { margin: 0 auto 0 10px; }
.cortana { width: 21px; height: 21px; border: 3px solid #111; border-radius: 50%; margin-left: -1px; }
.task { display: flex; align-items: center; justify-content: center; width: 42px; }
.task.tv { width: 50px; padding-right: 2px; }
.run { background: linear-gradient(#76b9ed, #76b9ed) center bottom / 33px 3px no-repeat; }
.cur { background: linear-gradient(#76b9ed, #76b9ed) center bottom / 40px 3px no-repeat, #3c3e3f; }
.gh { background: #a4571b; border-bottom: 3px solid #ff7b0d; padding-top: 3px; }
.pp { font: 700 10px "Liberation Sans", Arial, sans-serif; fill: #fff; }
.tray { display: flex; align-items: center; flex: 1; padding-left: 25px; border-right: 1px solid #5b5656; margin-right: 3px; }
.tray svg { fill: none; stroke: #fff; stroke-width: 1.200; }
.people { width: 16px; height: 16px; margin-right: 16px; }
.ti { width: 18px; height: 16px; margin: 0 3px; }
.eng { width: 24px; margin-left: 6px; font-size: 12px; letter-spacing: -.45px; }
.clock { display: flex; flex-direction: column; align-items: center; width: 60px; margin-left: 11px; font-size: 12px; line-height: 18px; letter-spacing: -.26px; }
.clock .date { letter-spacing: -.45px; }
.tray .note { width: 26px; height: 26px; margin-left: 16px; margin-top: 2px; stroke: none; }
.nt { font: 12px "Open Sans", sans-serif; fill: #fff; }
```
